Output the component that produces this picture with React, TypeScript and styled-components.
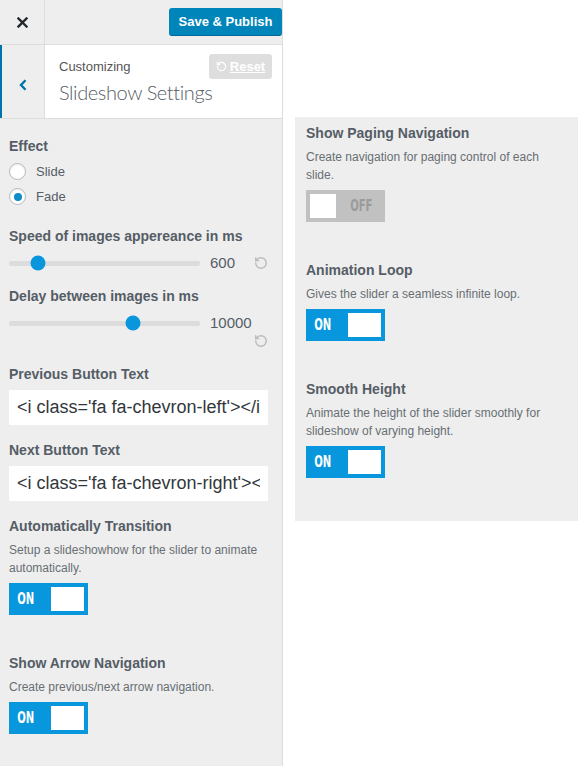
import React from 'react';
import styled, { createGlobalStyle } from 'styled-components';
import { RotateCcw } from 'lucide-react';

const GlobalStyle = createGlobalStyle`
  html, body { margin: 0; padding: 0; background: #fff; }
  body {
    font-family: "Liberation Sans", Arial, sans-serif;
    color: #555d66;
    -webkit-font-smoothing: antialiased;
  }
  * { box-sizing: border-box; }
`;

const Page = styled.div`
  display: flex;
  align-items: flex-start;
  width: 578px;
  height: 766px;
  overflow: hidden;
`;

const Sidebar = styled.aside`
  width: 283px;
  height: 766px;
  flex-shrink: 0;
  background: #eee;
  border-right: 1px solid #ddd;
  display: flex;
  flex-direction: column;
`;

const TopBar = styled.div`
  height: 45px;
  display: flex;
  align-items: center;
  justify-content: space-between;
  border-bottom: 1px solid #ddd;
`;

const CloseButton = styled.div`
  width: 45px;
  height: 44px;
  border-right: 1px solid #ddd;
  display: flex;
  align-items: center;
  justify-content: center;
`;

const PublishButton = styled.div`
  width: 113px;
  height: 28px;
  background: #0085ba;
  border-radius: 3px;
  border-bottom: 1px solid #006799;
  color: #fff;
  font-size: 13px;
  font-weight: 700;
  display: flex;
  align-items: center;
  justify-content: center;
`;

const SectionHead = styled.div`
  height: 74px;
  display: flex;
  background: #fff;
  border-bottom: 1px solid #ddd;
`;

const BackButton = styled.div`
  width: 45px;
  flex-shrink: 0;
  background: #eee;
  border-left: 2px solid #0073aa;
  border-right: 1px solid #ddd;
  display: flex;
  align-items: center;
  justify-content: center;
  padding-top: 6px;
`;

const TitleBlock = styled.div`
  flex: 1;
  min-width: 0;
  padding: 13px 0 0 14px;
`;

const Crumb = styled.div`
  font-size: 13px;
  line-height: 18px;
  color: #555;
`;

const SectionTitle = styled.div`
  margin-top: 3px;
  font-family: Lato, "Liberation Sans", sans-serif;
  font-weight: 300;
  font-size: 20px;
  letter-spacing: -0.4px;
  line-height: 26px;
  color: #555d66;
  white-space: nowrap;
`;

const ResetButton = styled.div`
  flex-shrink: 0;
  align-self: flex-start;
  margin: 9px 10px 0 0;
  width: 63px;
  height: 25px;
  border-radius: 3px;
  background: #dedede;
  color: #fff;
  font-size: 13px;
  font-weight: 700;
  text-decoration: underline;
  display: flex;
  align-items: center;
  justify-content: center;
  gap: 3px;
`;

const Content = styled.div`
  display: flex;
  flex-direction: column;
  padding: 17px 14px 0 9px;
`;

const Control = styled.div<{ $gap?: number }>`
  display: flex;
  flex-direction: column;
  align-items: flex-start;
  margin-top: ${p => p.$gap ?? 15}px;
  &:first-child { margin-top: 0; }
`;

const Label = styled.div`
  font-size: 14px;
  font-weight: 700;
  line-height: 20px;
  color: #555d66;
  white-space: nowrap;
`;

const Desc = styled.div`
  margin-top: 5px;
  font-size: 12px;
  line-height: 18px;
  color: #686e73;
`;

const RadioList = styled.div`
  margin-top: 3px;
  margin-bottom: 2px;
`;

const RadioRow = styled.div`
  height: 25px;
  display: flex;
  align-items: center;
  gap: 10px;
  font-size: 13px;
  color: #555d66;
`;

const RadioDot = styled.span<{ $checked?: boolean }>`
  width: 17px;
  height: 17px;
  border-radius: 50%;
  border: 1px solid #b4b9be;
  background: #fff;
  box-shadow: inset 0 1px 2px rgba(0, 0, 0, 0.07);
  display: inline-flex;
  align-items: center;
  justify-content: center;
  &::after {
    content: '';
    display: ${p => (p.$checked ? 'block' : 'none')};
    width: 8px;
    height: 8px;
    border-radius: 50%;
    background: #0f8cc6;
  }
`;

const SliderRow = styled.div`
  margin-top: 8px;
  width: 259px;
  display: flex;
  flex-wrap: wrap;
  align-items: center;
`;

const Track = styled.div`
  position: relative;
  width: 191px;
  height: 5px;
  background: #dcdcdc;
  border-radius: 2px;
`;

const Thumb = styled.span`
  position: absolute;
  top: 50%;
  width: 15px;
  height: 15px;
  border-radius: 50%;
  background: #0a96dc;
  transform: translate(-50%, -50%);
`;

const SliderValue = styled.span`
  margin-left: 10px;
  font-size: 15px;
  line-height: 18px;
  color: #555d66;
`;

const SliderReset = styled.span`
  margin-left: auto;
  padding-left: 5px;
  height: 18px;
  display: flex;
  align-items: center;
  color: #bbb;
`;

const TextInput = styled.input`
  display: block;
  margin-top: 6px;
  width: 259px;
  height: 35px;
  border: none;
  outline: none;
  background: #fff;
  padding: 0 8px;
  font-family: "Liberation Sans", Arial, sans-serif;
  font-size: 18px;
  color: #32373c;
`;

const ToggleBox = styled.div<{ $on: boolean }>`
  margin-top: 6px;
  margin-bottom: 23px;
  width: 79px;
  height: 32px;
  padding: 4px;
  background: ${p => (p.$on ? '#0897dc' : '#c1c1c1')};
  display: flex;
  flex-direction: ${p => (p.$on ? 'row' : 'row-reverse')};
  align-items: center;
  justify-content: space-between;
`;

const ToggleText = styled.span<{ $on: boolean }>`
  font-family: "DejaVu Sans Condensed", "DejaVu Sans", sans-serif;
  font-weight: 700;
  font-size: 16px;
  line-height: 24px;
  color: ${p => (p.$on ? '#fff' : '#9b9b9b')};
  display: inline-block;
  transform: scaleX(0.7);
  transform-origin: ${p => (p.$on ? 'left' : 'right')};
  padding-left: ${p => (p.$on ? '6px' : '0')};
  padding-right: ${p => (p.$on ? '0' : '12px')};
`;

const Knob = styled.span<{ $on: boolean }>`
  width: ${p => (p.$on ? 33 : 26)}px;
  height: 24px;
  background: #fff;
`;

const Main = styled.main`
  flex: 1;
  padding: 117px 0 0 12px;
`;

const Panel = styled.section`
  width: 283px;
  background: #eee;
  padding: 6px 20px 20px 11px;
  display: flex;
  flex-direction: column;
`;

function Toggle({ on }: { on: boolean }) {
  return (
    <ToggleBox $on={on}>
      <ToggleText $on={on}>{on ? 'ON' : 'OFF'}</ToggleText>
      <Knob $on={on} />
    </ToggleBox>
  );
}

function Slider({ value, pos }: { value: string; pos: number }) {
  return (
    <SliderRow>
      <Track>
        <Thumb style={{ left: `${pos}%` }} />
      </Track>
      <SliderValue>{value}</SliderValue>
      <SliderReset>
        <RotateCcw size={14} strokeWidth={2.4} />
      </SliderReset>
    </SliderRow>
  );
}

function ToggleControl({ title, desc, on, gap }: { title: string; desc: string; on: boolean; gap?: number }) {
  return (
    <Control $gap={gap}>
      <Label>{title}</Label>
      <Desc>{desc}</Desc>
      <Toggle on={on} />
    </Control>
  );
}

export default function App() {
  return (
    <>
      <GlobalStyle />
      <Page>
        <Sidebar>
          <TopBar>
            <CloseButton>
              <svg width="11" height="11" viewBox="0 0 11 11">
                <path d="M1.5 1.5 L9.5 9.5 M9.5 1.5 L1.5 9.5" stroke="#23282d" strokeWidth="2.4" strokeLinecap="square" />
              </svg>
            </CloseButton>
            <PublishButton>Save &amp; Publish</PublishButton>
          </TopBar>
          <SectionHead>
            <BackButton>
              <svg width="8" height="12" viewBox="0 0 8 12">
                <path d="M6.5 1.2 L2 6 L6.5 10.8" fill="none" stroke="#0073aa" strokeWidth="2.4" />
              </svg>
            </BackButton>
            <TitleBlock>
              <Crumb>Customizing</Crumb>
              <SectionTitle>Slideshow Settings</SectionTitle>
            </TitleBlock>
            <ResetButton>
              <RotateCcw size={11} strokeWidth={2.6} />
              Reset
            </ResetButton>
          </SectionHead>
          <Content>
            <Control>
              <Label>Effect</Label>
              <RadioList>
                <RadioRow>
                  <RadioDot />
                  Slide
                </RadioRow>
                <RadioRow>
                  <RadioDot $checked />
                  Fade
                </RadioRow>
              </RadioList>
            </Control>
            <Control>
              <Label>Speed of images appereance in ms</Label>
              <Slider value="600" pos={15} />
            </Control>
            <Control $gap={14}>
              <Label>Delay between images in ms</Label>
              <Slider value="10000" pos={65} />
            </Control>
            <Control $gap={14}>
              <Label>Previous Button Text</Label>
              <TextInput readOnly value="<i class='fa fa-chevron-left'></i>" />
            </Control>
            <Control>
              <Label>Next Button Text</Label>
              <TextInput readOnly value="<i class='fa fa-chevron-right'></i>" />
            </Control>
            <ToggleControl
              title="Automatically Transition"
              desc="Setup a slideshowhow for the slider to animate automatically."
              on
            />
            <ToggleControl
              title="Show Arrow Navigation"
              desc="Create previous/next arrow navigation."
              on
            />
          </Content>
        </Sidebar>
        <Main>
          <Panel>
            <ToggleControl
              title="Show Paging Navigation"
              desc="Create navigation for paging control of each slide."
              on={false}
            />
            <ToggleControl title="Animation Loop" desc="Gives the slider a seamless infinite loop." on />
            <ToggleControl
              title="Smooth Height"
              desc="Animate the height of the slider smoothly for slideshow of varying height."
              on
            />
          </Panel>
        </Main>
      </Page>
    </>
  );
}
